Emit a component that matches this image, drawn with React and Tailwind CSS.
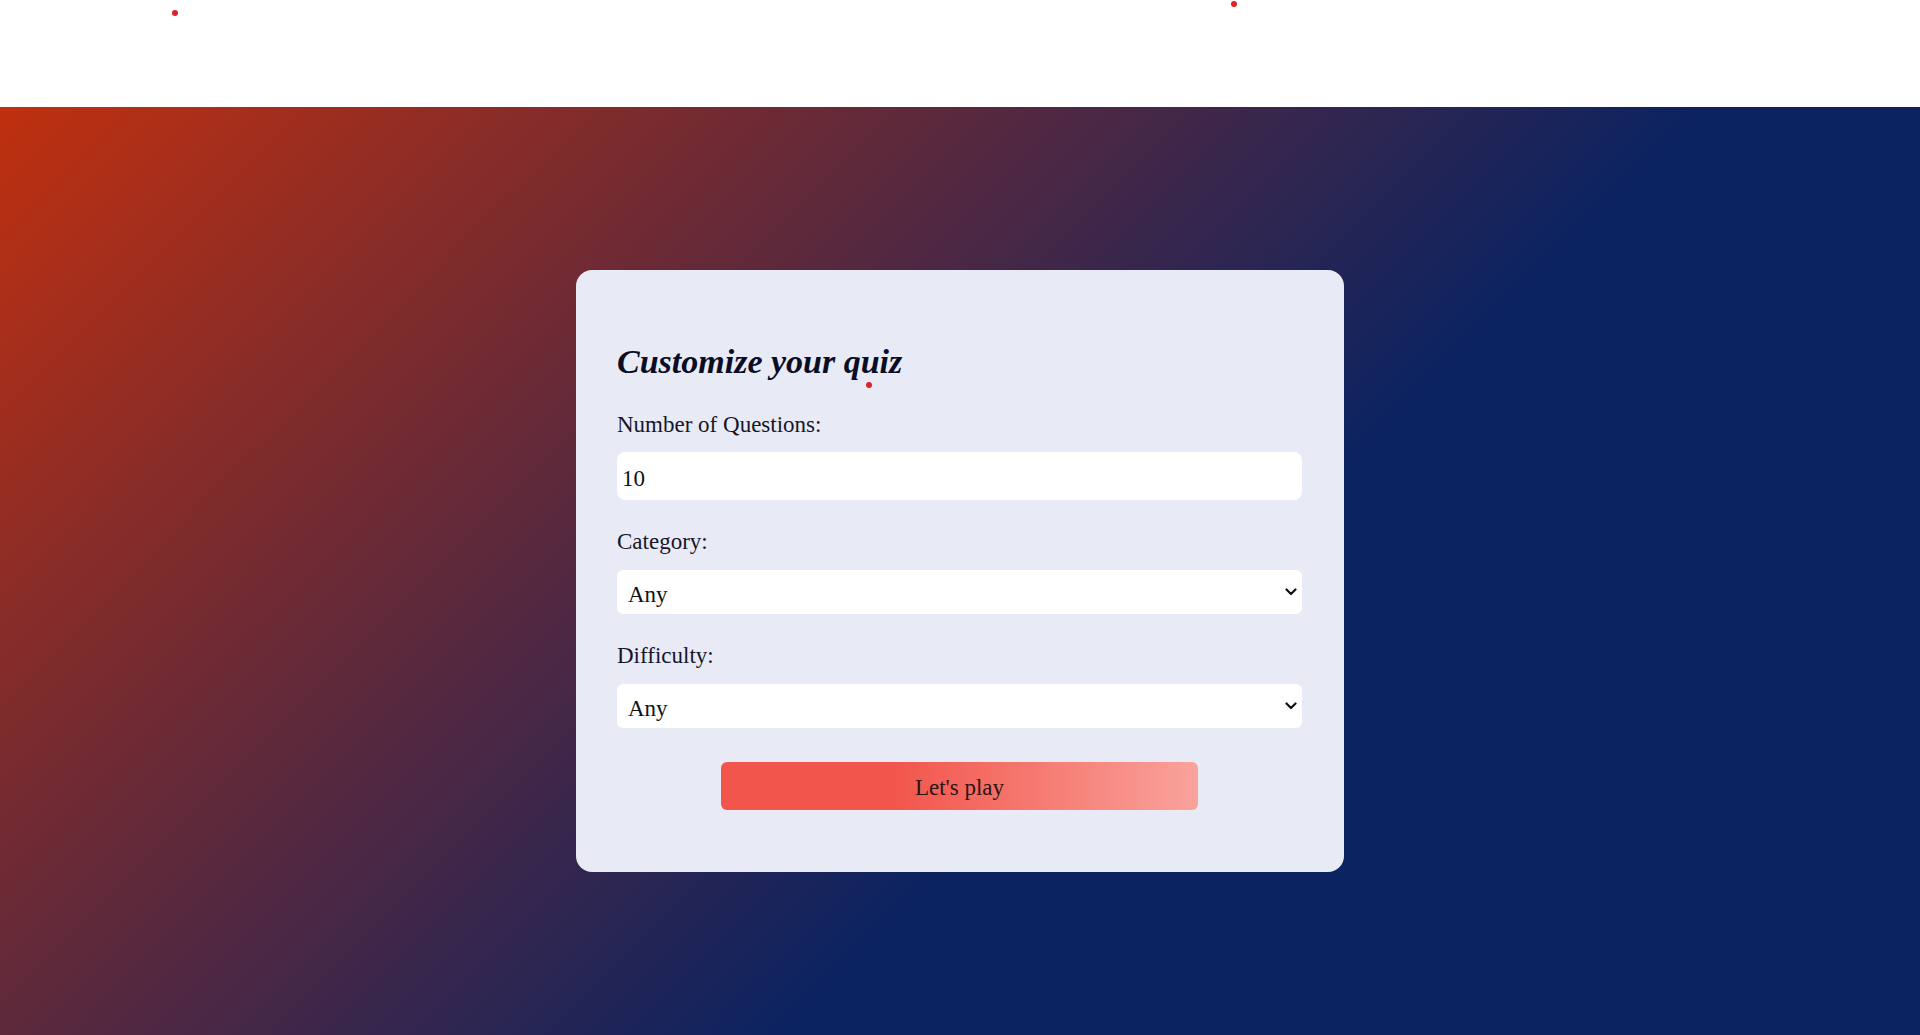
import { useState } from 'react';

function Chevron() {
  return (
    <svg
      className="pointer-events-none absolute right-[5px] top-1/2 -translate-y-1/2"
      width="12"
      height="8"
      viewBox="0 0 12 8"
      fill="none"
    >
      <path d="M1.5 1.5 6 6l4.5-4.5" stroke="#111" strokeWidth="2.2" strokeLinecap="round" strokeLinejoin="round" />
    </svg>
  );
}

function Field({ label, children, first }) {
  return (
    <div className={first ? 'mt-[27px]' : 'mt-[25px]'}>
      <label className="block text-[23px] leading-[33px] text-[#16162a]">{label}</label>
      {children}
    </div>
  );
}

export default function App() {
  const [amount, setAmount] = useState('10');
  const [category, setCategory] = useState('any');
  const [difficulty, setDifficulty] = useState('any');

  return (
    <div className="relative min-h-screen font-['Liberation_Serif',serif]">
      <div className="h-[107px] bg-white" />

      <main className="flex h-[928px] items-center justify-center bg-[linear-gradient(135deg,#c0300f_0%,#0b2361_60%)]">
        <div className="relative w-[768px] rounded-2xl bg-[#e8eaf5] pl-[41px] pr-[42px] pt-[72px] pb-[62px]">
          <h1 className="text-[34px] font-bold italic leading-[39px] text-[#0a0d26]">
            Customize your quiz
          </h1>

          <Field label="Number of Questions:" first>
            <input
              type="number"
              value={amount}
              onChange={(e) => setAmount(e.target.value)}
              className="mt-[11px] block h-[48px] w-full appearance-none rounded-lg bg-white pl-[5px] pt-[6px] text-[23px] text-[#111] outline-none [&::-webkit-inner-spin-button]:appearance-none"
            />
          </Field>

          <Field label="Category:">
            <div className="relative mt-[12px]">
              <select
                value={category}
                onChange={(e) => setCategory(e.target.value)}
                className="block h-[44px] w-full appearance-none rounded-md bg-white pl-[11px] pt-[6px] text-[23px] text-[#111] outline-none"
              >
                <option value="any">Any</option>
                <option value="9">General Knowledge</option>
                <option value="17">Science &amp; Nature</option>
                <option value="23">History</option>
              </select>
              <Chevron />
            </div>
          </Field>

          <Field label="Difficulty:">
            <div className="relative mt-[12px]">
              <select
                value={difficulty}
                onChange={(e) => setDifficulty(e.target.value)}
                className="block h-[44px] w-full appearance-none rounded-md bg-white pl-[11px] pt-[6px] text-[23px] text-[#111] outline-none"
              >
                <option value="any">Any</option>
                <option value="easy">Easy</option>
                <option value="medium">Medium</option>
                <option value="hard">Hard</option>
              </select>
              <Chevron />
            </div>
          </Field>

          <div className="mt-[34px] flex justify-center">
            <button className="h-[48px] w-[477px] rounded-md bg-[linear-gradient(90deg,#f2554b_36%,#f9a39c_100%)] pt-[4px] text-[23px] text-[#2a1515]">
              Let's play
            </button>
          </div>

          <span className="absolute left-[290px] top-[112px] h-[6px] w-[6px] rounded-full bg-[#e3202a]" />
        </div>
      </main>

      <span className="absolute left-[172px] top-[10px] h-[6px] w-[6px] rounded-full bg-[#e3202a]" />
      <span className="absolute left-[1231px] top-[1px] h-[6px] w-[6px] rounded-full bg-[#e3202a]" />
    </div>
  );
}
